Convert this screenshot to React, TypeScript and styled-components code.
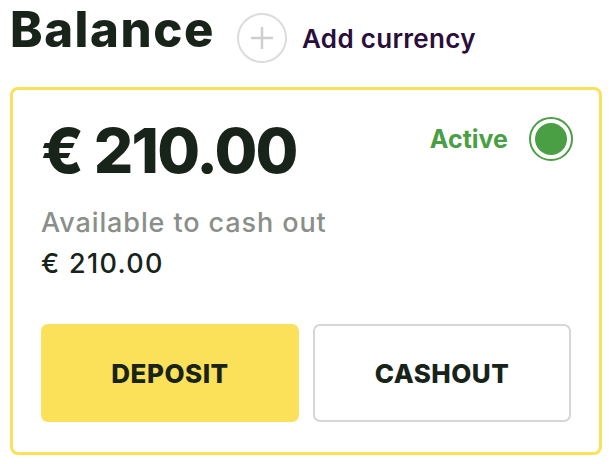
import React from 'react';
import styled, { createGlobalStyle } from 'styled-components';

const GlobalStyle = createGlobalStyle`
  html, body {
    margin: 0;
    padding: 0;
    background: #ffffff;
  }
  body {
    font-family: Inter, "Noto Sans", sans-serif;
    color: #18241a;
  }
`;

const Page = styled.div`
  width: 592px;
  padding: 0 12px 0 10px;
`;

const Header = styled.div`
  display: flex;
  align-items: center;
  height: 76px;
`;

const Title = styled.h1`
  align-self: flex-start;
  margin: 0;
  font-size: 49px;
  font-weight: 800;
  letter-spacing: 1.6px;
  color: #18241a;
  line-height: 60px;
`;

const AddButton = styled.button`
  display: flex;
  align-items: center;
  gap: 15px;
  margin-left: 22px;
  padding: 0;
  background: transparent;
  border: none;
  font-family: inherit;
  font-size: 26px;
  font-weight: 600;
  letter-spacing: 0.3px;
  color: #2a0f3a;
  cursor: pointer;
`;

const PlusCircle = styled.span`
  width: 46px;
  height: 46px;
  border: 2px solid #dcdcdc;
  border-radius: 50%;
  display: flex;
  align-items: center;
  justify-content: center;
`;

const Card = styled.div`
  margin-top: 11px;
  border: 3px solid #fbe05a;
  border-radius: 8px;
  padding: 30px 28px 30px 28px;
`;

const TopRow = styled.div`
  display: flex;
  justify-content: space-between;
  align-items: flex-start;
`;

const Amount = styled.div`
  font-size: 62px;
  font-weight: 800;
  line-height: 1;
  letter-spacing: -1.8px;
  color: #18241a;
`;

const Status = styled.div`
  display: flex;
  align-items: center;
  gap: 21px;
  margin-top: -3px;
  margin-right: -2px;
  font-size: 25px;
  font-weight: 700;
  color: #4a9f45;
`;

const Radio = styled.span`
  width: 40px;
  height: 40px;
  border: 2px solid #4a9f45;
  border-radius: 50%;
  display: flex;
  align-items: center;
  justify-content: center;

  &::after {
    content: '';
    width: 32px;
    height: 32px;
    border-radius: 50%;
    background: #4a9f45;
  }
`;

const Label = styled.div`
  margin-top: 25px;
  font-size: 27px;
  line-height: 32px;
  font-weight: 500;
  letter-spacing: 0.9px;
  color: #8a8f8a;
`;

const SubAmount = styled.div`
  margin-top: 9px;
  font-size: 27px;
  line-height: 32px;
  font-weight: 500;
  letter-spacing: 1.3px;
  color: #18241a;
`;

const Buttons = styled.div`
  display: grid;
  grid-template-columns: 1fr 1fr;
  gap: 14px;
  margin-top: 44px;
`;

const ActionButton = styled.button<{ $primary?: boolean }>`
  height: 98px;
  border-radius: 7px;
  border: 2px solid ${p => (p.$primary ? '#fbe05a' : '#d6d6d6')};
  background: ${p => (p.$primary ? '#fbe05a' : '#ffffff')};
  font-family: inherit;
  font-size: 26px;
  font-weight: 800;
  letter-spacing: 0.5px;
  color: #18241a;
  cursor: pointer;
`;

const App: React.FC = () => {
  return (
    <Page>
      <GlobalStyle />
      <Header>
        <Title>Balance</Title>
        <AddButton>
          <PlusCircle>
            <svg width="26" height="26" viewBox="0 0 26 26">
              <path d="M13 2v22M2 13h22" stroke="#cfcfcf" strokeWidth="2.5" />
            </svg>
          </PlusCircle>
          Add currency
        </AddButton>
      </Header>
      <Card>
        <TopRow>
          <Amount>€ 210.00</Amount>
          <Status>
            Active
            <Radio />
          </Status>
        </TopRow>
        <Label>Available to cash out</Label>
        <SubAmount>€ 210.00</SubAmount>
        <Buttons>
          <ActionButton $primary>DEPOSIT</ActionButton>
          <ActionButton>CASHOUT</ActionButton>
        </Buttons>
      </Card>
    </Page>
  );
};

export default App;
